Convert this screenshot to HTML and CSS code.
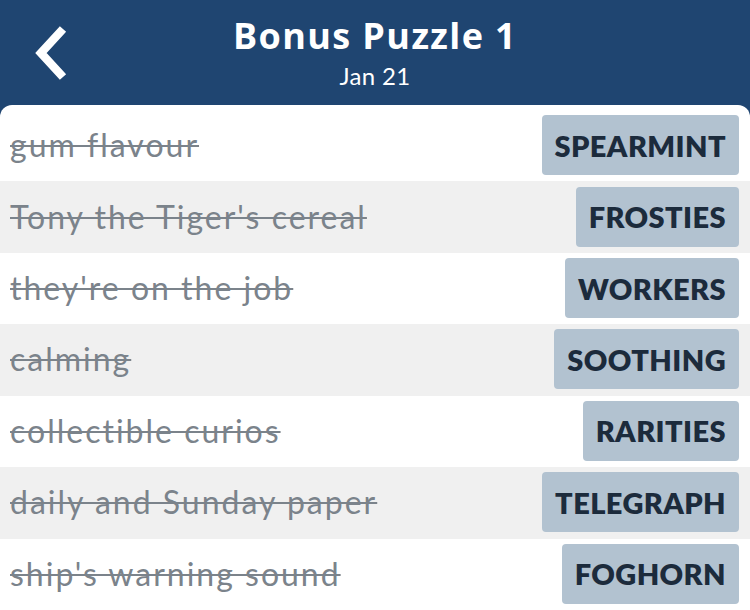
FILE: index.html
```html
<!DOCTYPE html>
<html>
<head>
    <title>Bonus Puzzle 1</title>
    <link rel="stylesheet" href="styles.css">
</head>
<body>
    <header class="barra">
        <a class="volver" href="#">
            <svg width="34" height="54" viewBox="0 0 34 54">
                <path d="M30 3 L8 27 L30 51" fill="none" stroke="#fff" stroke-width="8.5" stroke-linejoin="miter"/>
            </svg>
        </a>
        <div class="titulo">
            <h1>Bonus Puzzle 1</h1>
            <div class="fecha">Jan 21</div>
        </div>
    </header>

    <ul class="lista">
        <li class="fila"><span class="pista">gum flavour</span><span class="respuesta">SPEARMINT</span></li>
        <li class="fila"><span class="pista">Tony the Tiger's cereal</span><span class="respuesta">FROSTIES</span></li>
        <li class="fila"><span class="pista">they're on the job</span><span class="respuesta">WORKERS</span></li>
        <li class="fila"><span class="pista">calming</span><span class="respuesta">SOOTHING</span></li>
        <li class="fila"><span class="pista">collectible curios</span><span class="respuesta">RARITIES</span></li>
        <li class="fila"><span class="pista">daily and Sunday paper</span><span class="respuesta">TELEGRAPH</span></li>
        <li class="fila"><span class="pista">ship's warning sound</span><span class="respuesta">FOGHORN</span></li>
    </ul>
</body>
</html>
```

FILE: styles.css
```css
body {
    margin: 0;
    font-family: Lato, "Open Sans", sans-serif;
    background: #1f4571;
    height: 610px;
    overflow: hidden;
}

/* Cabecera */
.barra {
    height: 105px;
    display: flex;
    align-items: center;
    justify-content: center;
    position: relative;
    color: #fff;
}

.volver {
    position: absolute;
    left: 33px;
    top: 26px;
}

.titulo {
    text-align: center;
    margin-top: 0;
}

.titulo h1 {
    margin: 0;
    font-family: "Open Sans", sans-serif;
    font-size: 36px;
    font-weight: 700;
    letter-spacing: 1.4px;
    line-height: 42px;
}

.fecha {
    font-size: 24px;
    letter-spacing: 0.3px;
    line-height: 30px;
    margin-top: 4px;
}

/* Lista de pistas */
.lista {
    list-style: none;
    margin: 0;
    padding: 5px 0 0 0;
    background: #fff;
    border-radius: 12px 12px 0 0;
    display: grid;
    grid-auto-rows: 71.43px;
    height: 505px;
    box-sizing: border-box;
}

.fila {
    display: flex;
    align-items: center;
    justify-content: space-between;
    padding: 0 11px 0 10px;
}

.fila:nth-child(even) {
    background: #f0f0f0;
}

.pista {
    font-size: 32px;
    letter-spacing: 2px;
    color: #7b838b;
    text-decoration: line-through;
    text-decoration-thickness: 2px;
    margin-top: -2px;
}

.respuesta {
    height: 60px;
    display: flex;
    align-items: center;
    padding: 0 13px;
    background: #b2c2d0;
    color: #1c2b3c;
    font-size: 29px;
    font-weight: 800;
    letter-spacing: 0.4px;
    border-radius: 4px;
    margin-top: -1px;
}
```
